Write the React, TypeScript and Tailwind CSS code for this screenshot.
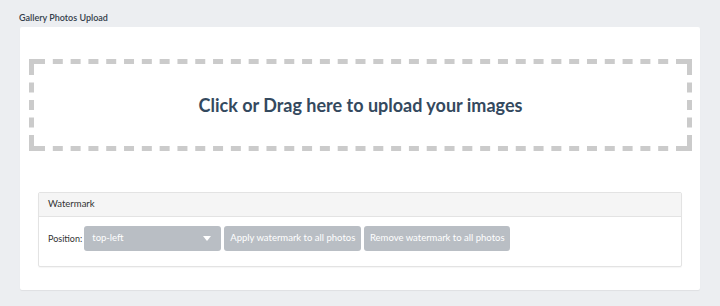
import React from 'react';

const font = { fontFamily: 'Lato, "Open Sans", sans-serif' };

// dashed frame of the drop zone: 663x92, 5px stroke, L-shaped corners
const W = 663;
const H = 92;
const S = 5;

const dashes = (len: number, corner: number, dash: number, gap: number) => {
  const inner = len - corner * 2;
  const n = Math.floor((inner - gap) / (dash + gap));
  const g = (inner - n * dash) / (n + 1);
  const parts: number[] = [corner];
  for (let i = 0; i < n; i++) parts.push(g, dash);
  parts.push(g, corner);
  return parts.join(' ');
};

const DropFrame: React.FC = () => {
  const v = dashes(H, 16, 10, 7.5);
  const h = dashes(W - S * 2, 11, 10, 7.5);
  return (
    <svg className="pointer-events-none absolute inset-0" width={W} height={H} viewBox={`0 0 ${W} ${H}`}>
      <g stroke="#cbcbcb" strokeWidth={S} fill="none">
        <line x1={S / 2} y1={0} x2={S / 2} y2={H} strokeDasharray={v} />
        <line x1={W - S / 2} y1={0} x2={W - S / 2} y2={H} strokeDasharray={v} />
        <line x1={S} y1={S / 2} x2={W - S} y2={S / 2} strokeDasharray={h} />
        <line x1={S} y1={H - S / 2} x2={W - S} y2={H - S / 2} strokeDasharray={h} />
      </g>
    </svg>
  );
};

const GalleryUpload: React.FC = () => {
  return (
    <div className="min-h-[306px] w-[720px] bg-[#eceef1] pt-[11px]" style={font}>
      <div className="pl-[19px] text-[9px] font-semibold leading-[13px] text-[#333d4a]">Gallery Photos Upload</div>

      {/* card */}
      <div className="ml-[20px] mt-[3px] w-[680px] rounded-[2px] bg-white pt-[32px] pr-[8px] pb-[23px] pl-[9px] shadow-[0_1px_1px_rgba(0,0,0,0.06)]">
        <div className="relative flex h-[92px] w-[663px] items-center justify-center">
          <DropFrame />
          <span className="text-[18px] font-bold text-[#34495e]">Click or Drag here to upload your images</span>
        </div>

        {/* Watermark panel */}
        <div className="mt-[41px] ml-[9px] mr-[10px] rounded-[2px] border border-[#e3e3e3] shadow-[0_1px_1px_rgba(0,0,0,0.04)]">
          <div className="flex h-[24px] items-center border-b border-[#e3e3e3] bg-[#f5f5f5] pl-[9px] text-[9.5px] text-[#333]">
            Watermark
          </div>
          <div className="flex items-center pt-[9px] pb-[15px] pl-[9px]">
            <span className="mr-[2px] text-[9px] text-[#333]">Position:</span>
            <div className="flex h-[25px] w-[137px] items-center justify-between rounded-[3px] bg-[#b9bec4] pl-[8px] pr-[10px] text-[9.5px] text-white">
              <span>top-left</span>
              <svg width="8" height="5" viewBox="0 0 8 5">
                <path d="M0 0 L8 0 L4 5 Z" fill="#fff" />
              </svg>
            </div>
            <button className="ml-[3px] h-[25px] w-[137px] rounded-[3px] bg-[#b9bec4] text-[9.5px] text-white">
              Apply watermark to all photos
            </button>
            <button className="ml-[3px] h-[25px] w-[146px] rounded-[3px] bg-[#b9bec4] text-[9.5px] text-white">
              Remove watermark to all photos
            </button>
          </div>
        </div>
      </div>
    </div>
  );
};

export default GalleryUpload;
